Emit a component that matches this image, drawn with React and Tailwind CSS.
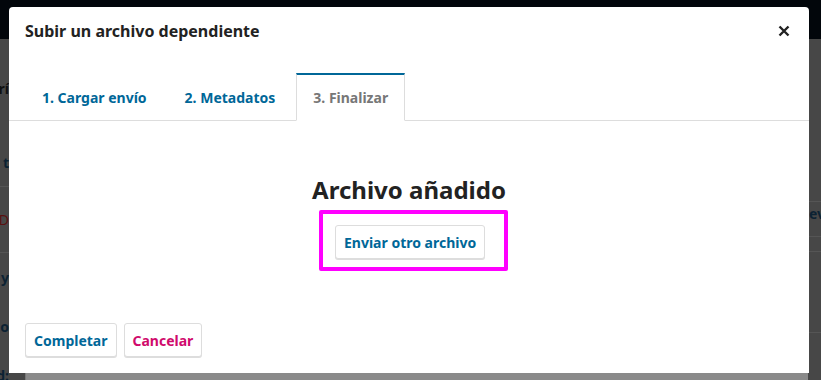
import { useState } from "react";

const tabs = ["1. Cargar envío", "2. Metadatos", "3. Finalizar"];

function CloseIcon() {
  return (
    <svg width="12" height="12" viewBox="0 0 12 12" aria-hidden="true">
      <path d="M1.5 1.5 L10.5 10.5 M10.5 1.5 L1.5 10.5" stroke="#222" strokeWidth="2.4" strokeLinecap="butt" />
    </svg>
  );
}

function BackgroundPage() {
  return (
    <div className="flex h-[380px] w-[821px] flex-col bg-[#474747]">
      <div className="h-[39px] shrink-0 bg-[#02060b]" />
      <div className="flex min-h-0 flex-1">
        {/* left sliver of the page behind */}
        <div className="w-[9px] overflow-hidden text-[14px] font-bold text-[#0c2233]">
          <div className="h-[25px]" />
          <div className="flex h-[48px] items-center justify-end whitespace-nowrap text-[#101010]">rí</div>
          <div className="h-[26px]" />
          <div className="flex h-[48px] items-center justify-end whitespace-nowrap">t</div>
          <div className="h-px w-full bg-[#555]" />
          <div className="flex h-[65px] items-center justify-end whitespace-nowrap font-normal text-[#5a1010]">D</div>
          <div className="h-px w-full bg-[#555]" />
          <div className="flex h-[48px] items-center justify-end whitespace-nowrap">y</div>
          <div className="flex h-[50px] items-center justify-end whitespace-nowrap">o</div>
          <div className="flex h-[48px] items-center justify-end whitespace-nowrap">d:</div>
        </div>
        <div className="flex flex-1 flex-col justify-end">
          <div className="ml-[16px] mr-[1px] h-[7px] border-l border-[#777] bg-[#8a8a8a]" />
        </div>
        {/* right sliver */}
        <div className="w-[12px] overflow-hidden text-[14px] font-bold text-[#0c2233]">
          <div className="h-[162px]" />
          <div className="h-px w-full bg-[#555]" />
          <div className="flex h-[22px] items-center whitespace-nowrap">ev</div>
          <div className="mt-[12px] h-px w-full bg-[#555]" />
          <div className="mt-[14px] h-px w-full bg-[#555]" />
          <div className="mt-[80px] h-px w-full bg-[#555]" />
        </div>
      </div>
    </div>
  );
}

export default function App() {
  const [active] = useState(2);

  return (
    <div className="relative h-[380px] w-[821px] overflow-hidden" style={{ fontFamily: '"Noto Sans", sans-serif' }}>
      <BackgroundPage />

      {/* modal */}
      <div className="absolute left-[9px] top-[7px] flex h-[366px] w-[800px] flex-col rounded-t-[4px] bg-white">
        <div className="flex items-center justify-between pl-4 pr-[19px] pt-[12px]">
          <h2 className="text-[16px] font-bold leading-[24px] text-[#222]">Subir un archivo dependiente</h2>
          <button aria-label="Cerrar" className="flex h-[24px] items-center">
            <CloseIcon />
          </button>
        </div>

        <div className="mt-[30px] flex border-b border-[#ddd] pl-4">
          {tabs.map((t, i) => (
            <div
              key={t}
              className={
                i === active
                  ? "-mb-px ml-[4px] flex h-[48px] items-center border-x border-t-2 border-x-[#ddd] border-t-[#006798] border-b border-b-white bg-white px-4 text-[14px] font-bold text-[#777]"
                  : "ml-[4px] flex h-[47px] items-center border-x border-t-2 border-transparent px-4 text-[14px] font-bold text-[#006798] first:ml-0"
              }
            >
              {t}
            </div>
          ))}
        </div>

        <div className="flex flex-col items-center pt-[53px]">
          <h3 className="text-[24px] font-bold leading-[32px] text-[#222]">Archivo añadido</h3>
          <div className="ml-[9px] mt-[4px] h-[61px] w-[189px] rounded-[2px] border-4 border-[#ff00ff] pl-[12px] pt-[11px]">
            <button className="h-[34px] rounded-[3px] border border-[#ddd] bg-white px-[8px] text-[14px] font-bold text-[#006798] shadow-[0_1px_0_#ddd]">
              Enviar otro archivo
            </button>
          </div>
        </div>

        <div className="mt-auto flex gap-[7px] px-4 pb-4">
          <button className="h-[34px] rounded-[3px] border border-[#ddd] bg-white px-[8px] text-[14px] font-bold text-[#006798] shadow-[0_1px_0_#ddd]">
            Completar
          </button>
          <button className="h-[34px] rounded-[3px] border border-[#ddd] bg-white px-[8px] text-[14px] font-bold text-[#d00a6c] shadow-[0_1px_0_#ddd]">
            Cancelar
          </button>
        </div>
      </div>
    </div>
  );
}
